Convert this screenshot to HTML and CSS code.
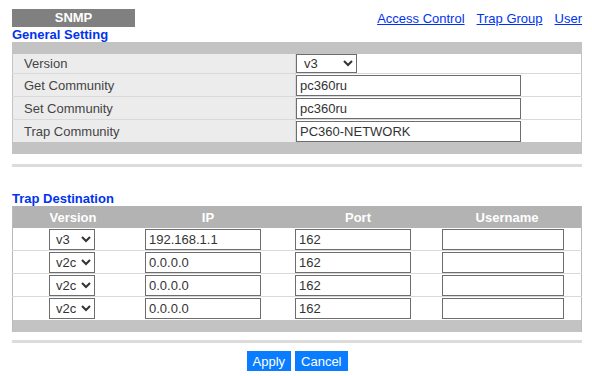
FILE: index.html
```html
<!DOCTYPE html>
<html lang="en">
<head>
    <meta charset="UTF-8">
    <title>SNMP</title>
    <link rel="stylesheet" href="styles.css">
</head>
<body>
    <div class="page">
        <div class="topbar">
            <div class="tab">SNMP</div>
            <div class="links">
                <a href="#">Access Control</a>
                <a href="#">Trap Group</a>
                <a href="#">User</a>
            </div>
        </div>

        <div class="section-title">General Setting</div>
        <table class="general">
            <tr class="bar"><td colspan="2"></td></tr>
            <tr class="first">
                <td class="label">Version</td>
                <td class="value">
                    <select class="sel-wide">
                        <option>v3</option>
                        <option>v2c</option>
                    </select>
                </td>
            </tr>
            <tr>
                <td class="label">Get Community</td>
                <td class="value"><input type="text" value="pc360ru"></td>
            </tr>
            <tr>
                <td class="label">Set Community</td>
                <td class="value"><input type="text" value="pc360ru"></td>
            </tr>
            <tr>
                <td class="label">Trap Community</td>
                <td class="value"><input type="text" value="PC360-NETWORK"></td>
            </tr>
            <tr class="bar"><td colspan="2"></td></tr>
        </table>
        <div class="divider divider-top"></div>

        <div class="section-title trap-title">Trap Destination</div>
        <table class="trap">
            <tr class="head">
                <th class="c-ver">Version</th>
                <th class="c-ip">IP</th>
                <th class="c-port">Port</th>
                <th class="c-user">Username</th>
            </tr>
            <tr>
                <td><select class="sel-small"><option>v3</option><option>v2c</option></select></td>
                <td><input type="text" class="ip" value="192.168.1.1"></td>
                <td><input type="text" class="port" value="162"></td>
                <td><input type="text" class="user" value=""></td>
            </tr>
            <tr>
                <td><select class="sel-small"><option>v2c</option><option>v3</option></select></td>
                <td><input type="text" class="ip" value="0.0.0.0"></td>
                <td><input type="text" class="port" value="162"></td>
                <td><input type="text" class="user" value=""></td>
            </tr>
            <tr>
                <td><select class="sel-small"><option>v2c</option><option>v3</option></select></td>
                <td><input type="text" class="ip" value="0.0.0.0"></td>
                <td><input type="text" class="port" value="162"></td>
                <td><input type="text" class="user" value=""></td>
            </tr>
            <tr>
                <td><select class="sel-small"><option>v2c</option><option>v3</option></select></td>
                <td><input type="text" class="ip" value="0.0.0.0"></td>
                <td><input type="text" class="port" value="162"></td>
                <td><input type="text" class="user" value=""></td>
            </tr>
            <tr class="bar"><td colspan="4"></td></tr>
        </table>
        <div class="divider"></div>

        <div class="buttons">
            <button>Apply</button>
            <button>Cancel</button>
        </div>
    </div>
</body>
</html>
```

FILE: styles.css
```css
body {
    margin: 0;
    font-family: "Liberation Sans", Arial, sans-serif;
    font-size: 13px;
    color: #333;
    background-color: #fff;
}
.page {
    width: 570px;
    padding-left: 12px;
}
.topbar {
    display: flex;
    justify-content: space-between;
    align-items: flex-start;
    height: 27px;
}
.tab {
    margin-top: 9px;
    width: 123px;
    height: 18px;
    line-height: 18px;
    background-color: #808080;
    color: #fff;
    font-weight: bold;
    text-align: center;
}
.links {
    display: flex;
    gap: 12px;
    margin-top: 11px;
}
.links a {
    color: #0033ee;
    font-size: 13px;
}
.section-title {
    color: #0033ee;
    font-weight: bold;
    font-size: 13px;
    height: 15px;
    line-height: 15px;
}
table {
    width: 570px;
    border-collapse: collapse;
}
td, th {
    padding: 0;
    vertical-align: middle;
}
table .bar td {
    height: 12px;
    background-color: #c3c3c3;
    border-bottom: none;
}
.general {
    border-left: 1px solid #c3c3c3;
    border-right: 1px solid #c3c3c3;
}
.general .label {
    width: 271px;
    height: 22px;
    padding-left: 11px;
    background-color: #ececec;
    color: #444;
    border-bottom: 1px solid #d9d9d9;
    border-right: 1px solid #d9d9d9;
}
.general .value {
    height: 22px;
    border-bottom: 1px solid #d9d9d9;
}
.general .first td {
    height: 19px;
}
.general tr:nth-last-child(2) td {
    border-bottom: none;
}
input, select {
    display: block;
    font-family: "Liberation Sans", Arial, sans-serif;
    font-size: 13px;
    color: #333;
    border: 1px solid #6d6d6d;
    border-radius: 0;
    box-sizing: border-box;
    height: 21px;
    padding: 0 3px;
    background-color: #fff;
}
.general input {
    width: 225px;
}
.sel-wide {
    width: 61px;
    height: 19px;
}
.divider {
    height: 3px;
    margin-top: 8px;
    background-color: #dcdcdc;
}
.divider-top {
    margin-top: 10px;
}
.trap-title {
    margin-top: 24px;
    height: 15px;
    line-height: 15px;
}
.trap {
    border-left: 1px solid #b9b9b9;
    border-right: 1px solid #b9b9b9;
}
.trap .head th {
    height: 22px;
    background-color: #b3b3b3;
    color: #fff;
    font-weight: bold;
    font-size: 13px;
}
.trap td {
    height: 22px;
    border-bottom: 1px solid #d9d9d9;
}
.trap tr:nth-last-child(2) td {
    height: 23px;
    border-bottom: none;
}
.c-ver { width: 120px; }
.c-ip { width: 150px; }
.c-port { width: 150px; }
.trap td:nth-child(1) { padding-left: 36px; }
.trap td:nth-child(2) { padding-left: 12px; }
.trap td:nth-child(3) { padding-left: 12px; }
.trap td:nth-child(4) { padding-left: 9px; }
.trap .bar td { padding-left: 0; }
.sel-small {
    width: 46px;
    padding: 0 2px;
}
.ip, .port {
    width: 116px;
}
.user {
    width: 122px;
}
.buttons {
    display: flex;
    justify-content: center;
    gap: 4px;
    margin-top: 8px;
}
button {
    font-family: "Liberation Sans", Arial, sans-serif;
    font-size: 13px;
    color: #fff;
    background-color: #0a7cff;
    border: none;
    height: 20px;
    padding: 0 6px;
    cursor: pointer;
}
```
